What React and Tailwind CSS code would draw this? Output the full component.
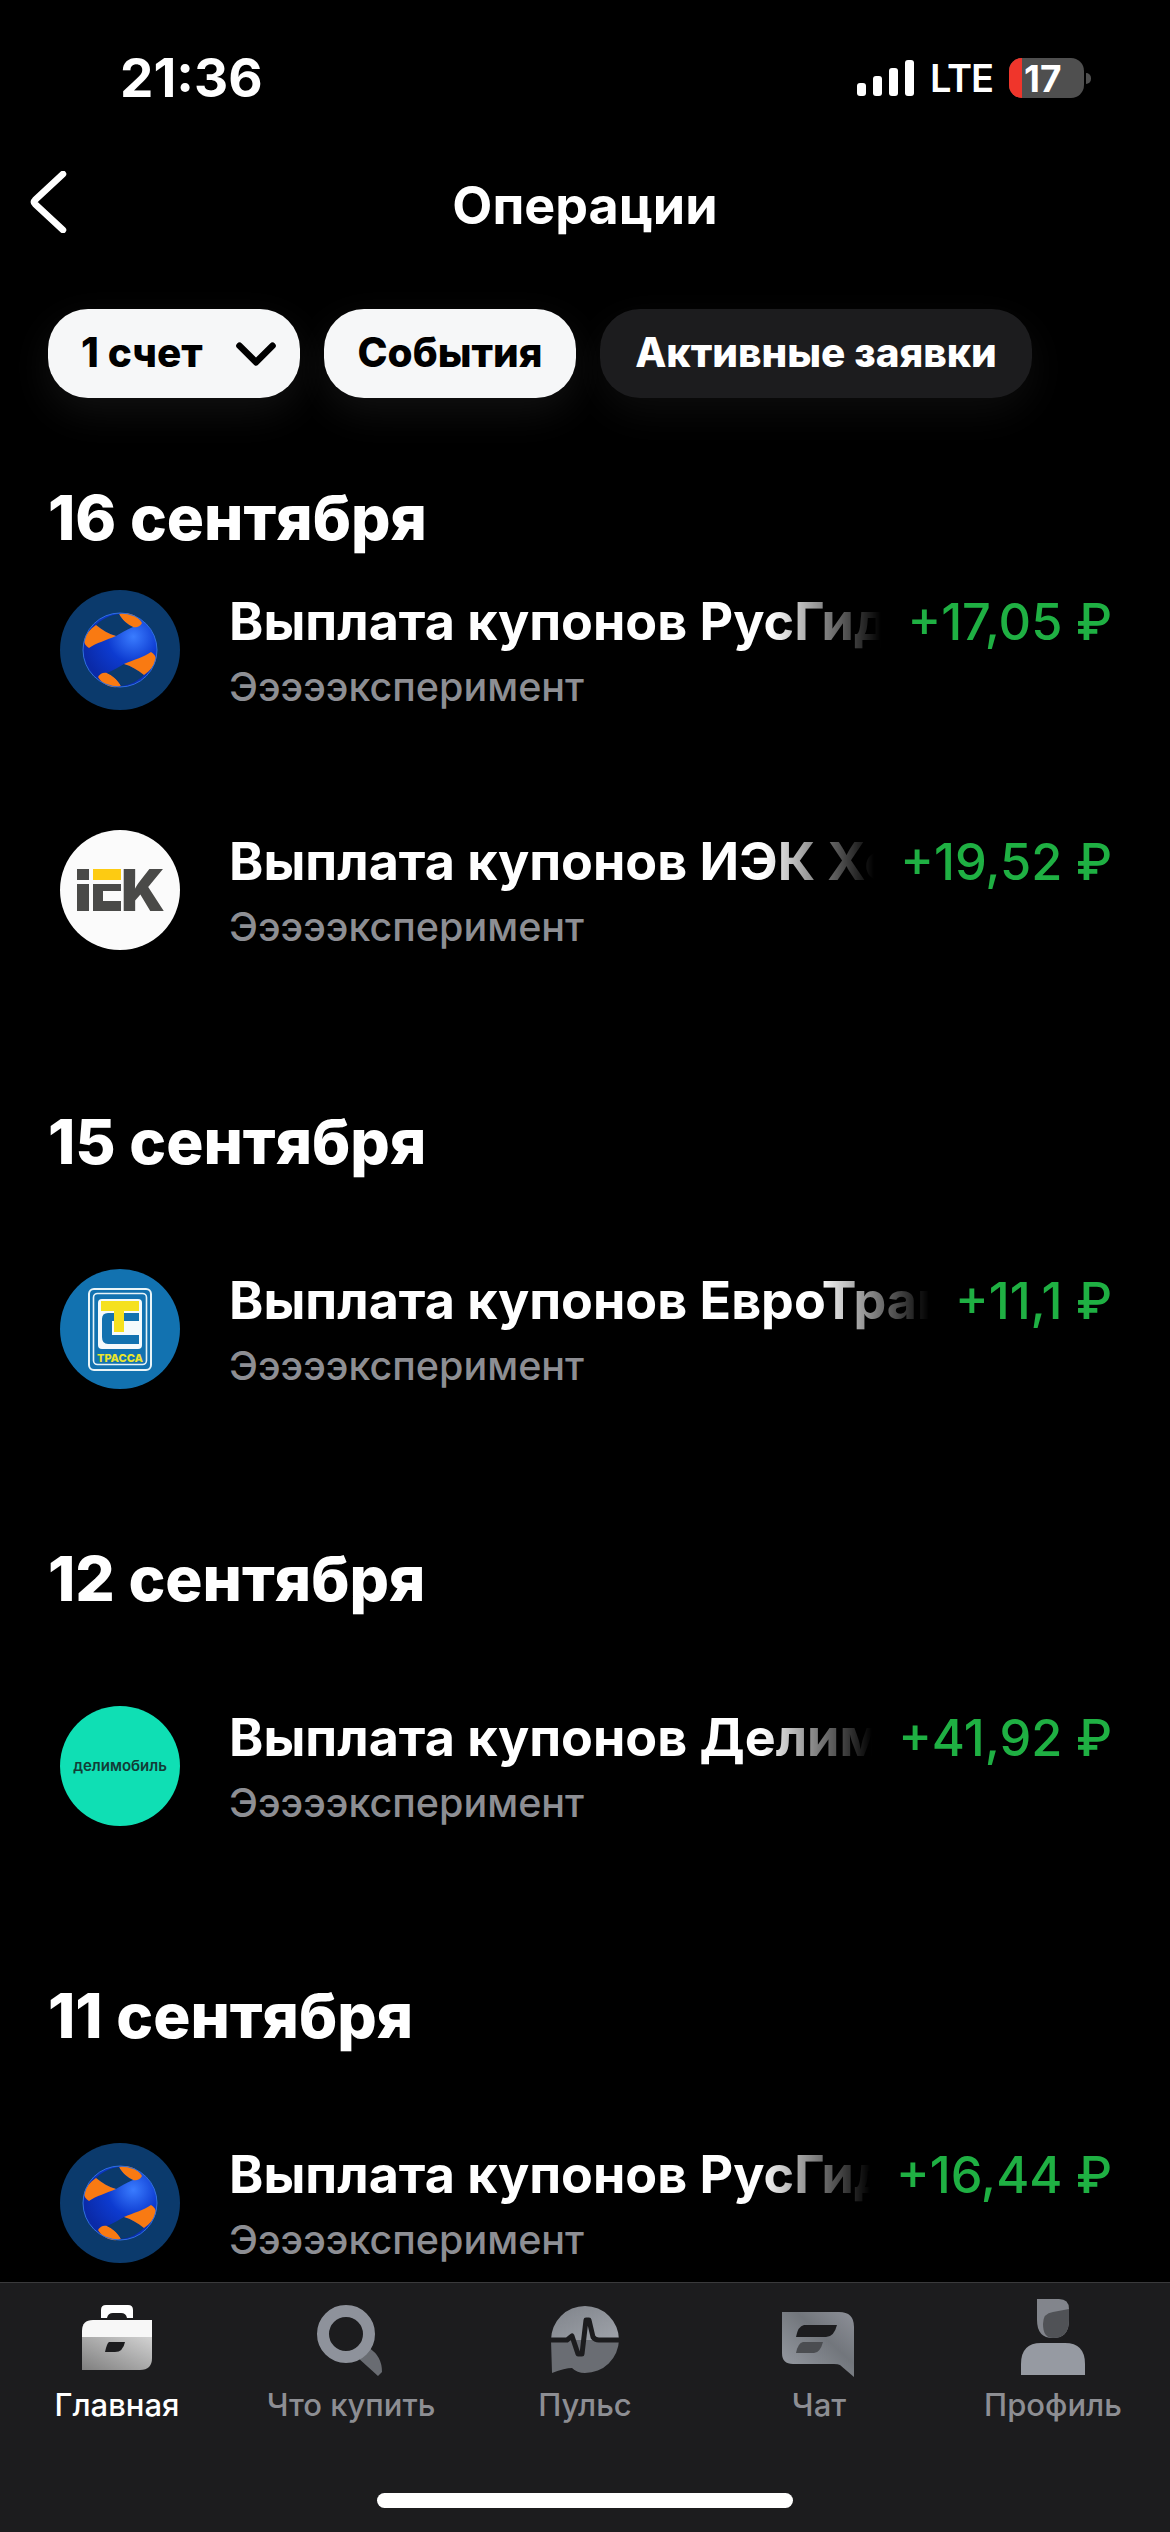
import React from "react";
import { ChevronDown } from "lucide-react";

const days = [
  {
    date: "16 сентября",
    first: true,
    rows: [
      { name: "Выплата купонов РусГидро", amount: "+17,05 ₽", logo: "hydro" },
      { name: "Выплата купонов ИЭК Холдинг", amount: "+19,52 ₽", logo: "iek" },
    ],
  },
  { date: "15 сентября", rows: [{ name: "Выплата купонов ЕвроТранс", amount: "+11,1 ₽", logo: "trassa" }] },
  { date: "12 сентября", rows: [{ name: "Выплата купонов Делимобиль", amount: "+41,92 ₽", logo: "deli" }] },
  { date: "11 сентября", rows: [{ name: "Выплата купонов РусГидро", amount: "+16,44 ₽", logo: "hydro" }] },
];

function HydroLogo() {
  const half = (
    <>
      <path d="M59 24C66 21 77 24 82 33C80 37 76 38 73 37C68 35 62 30 59 24Z" fill="#f97a12" />
      <path d="M36 35C42 29 50 25 59 24C62 30 68 35 73 37C66 40 61 43 56 46C49 44 42 40 36 35Z" fill="#0b3a6c" />
      <path d="M24 50C26 44 30 39 36 35C42 40 49 44 56 46C47 50 36 53 29 58C26 56 24 54 24 50Z" fill="#f97a12" />
    </>
  );
  return (
    <svg viewBox="0 0 120 120" className="h-[120px] w-[120px] shrink-0">
      <defs>
        <radialGradient id="sphere" cx="0.68" cy="0.32" r="0.7">
          <stop offset="0" stopColor="#3a7cff" />
          <stop offset="0.5" stopColor="#0d3bd0" />
          <stop offset="1" stopColor="#0a2aa8" />
        </radialGradient>
      </defs>
      <circle cx="60" cy="60" r="60" fill="#0b3a6c" />
      <circle cx="60" cy="60" r="37" fill="url(#sphere)" />
      {half}
      <g transform="rotate(180 60 60)">{half}</g>
      <circle cx="60" cy="60" r="37" fill="none" stroke="#2f6fe0" strokeWidth="1" />
    </svg>
  );
}

function IekLogo() {
  return (
    <svg viewBox="0 0 120 120" className="h-[120px] w-[120px] shrink-0">
      <circle cx="60" cy="60" r="60" fill="#fbfbfb" />
      <rect x="17" y="39" width="12" height="11" fill="#4a4a48" />
      <rect x="17" y="54" width="12" height="27" fill="#4a4a48" />
      <rect x="33" y="39" width="28" height="11" fill="#fdcb12" />
      <rect x="33" y="54" width="28" height="7" fill="#4a4a48" />
      <rect x="33" y="54" width="10" height="27" fill="#4a4a48" />
      <rect x="33" y="71" width="28" height="10" fill="#4a4a48" />
      <text x="61" y="81" fontFamily="Inter, sans-serif" fontWeight="900" fontSize="58" fill="#4a4a48">K</text>
    </svg>
  );
}

function TrassaLogo() {
  return (
    <svg viewBox="0 0 120 120" className="h-[120px] w-[120px] shrink-0">
      <circle cx="60" cy="60" r="60" fill="#1272b0" />
      <rect x="29" y="20" width="62" height="81" rx="5" fill="none" stroke="#e8f4f8" strokeWidth="2" />
      <rect x="33.5" y="24.5" width="53" height="71" rx="4" fill="none" stroke="#e8f4f8" strokeWidth="1.6" />
      <rect x="38" y="30" width="44" height="50" rx="4" fill="#f4fafc" />
      <path d="M79 44H48Q42 44 42 50V68Q42 75 48 75H79V66H52V52H79Z" fill="#1272b0" />
      <rect x="41" y="32" width="38" height="10" fill="#f5e11e" />
      <rect x="54" y="42" width="10" height="21" fill="#f5e11e" />
      <text x="60" y="93" textAnchor="middle" fontFamily="Inter, sans-serif" fontWeight="800" fontSize="11" fill="#ece42c">ТРАССА</text>
    </svg>
  );
}

function DeliLogo() {
  return (
    <div className="flex h-[120px] w-[120px] shrink-0 items-center justify-center rounded-full bg-[#0fdfb4] text-[15px] font-semibold text-[#123c36]">
      делимобиль
    </div>
  );
}

const logos = { hydro: HydroLogo, iek: IekLogo, trassa: TrassaLogo, deli: DeliLogo };

function Row({ name, amount, logo, tight }) {
  const Logo = logos[logo];
  return (
    <div className={`flex h-[240px] shrink-0 items-center gap-[49px] pl-[60px] pr-[58px] ${tight ? "-mt-[23px]" : "mt-[32px]"}`}>
      <Logo />
      <div className="min-w-0 flex-1 pt-[14px]">
        <div className="flex items-center gap-[26px] leading-[60px]">
          <div className="min-w-0 flex-1 overflow-hidden whitespace-nowrap text-[52px] font-bold text-white [mask-image:linear-gradient(to_right,#000_calc(100%-110px),transparent)]">
            {name}
          </div>
          <div className="shrink-0 text-[50.5px] font-medium text-[#1fb043]">{amount}</div>
        </div>
        <div className="text-[39.5px] font-medium leading-[70px] text-[#8d8e93]">Эээээксперимент</div>
      </div>
    </div>
  );
}

function HomeIcon() {
  return (
    <svg viewBox="0 0 80 80" className="h-[80px] w-[80px] overflow-visible">
      <defs>
        <linearGradient id="case" x1="0" y1="1" x2="1" y2="0">
          <stop offset="0" stopColor="#7f7f7f" />
          <stop offset="1" stopColor="#d2d2d2" />
        </linearGradient>
      </defs>
      <path d="M24 18V10Q24 5 29 5H51Q56 5 56 10V18H50Q49 13 44 13H36Q31 13 30 18Z" fill="#fff" />
      <path d="M5 37V31Q5 20 16 20H75V37Z" fill="#f7f7f7" />
      <path d="M5 37H75V58Q75 70 63 70H5Z" fill="url(#case)" />
      <path d="M32 42H48Q46 52 38 52H28Q30 43 32 42Z" fill="#1c1c1e" />
    </svg>
  );
}

function SearchIcon() {
  return (
    <svg viewBox="0 0 80 80" className="h-[80px] w-[80px] overflow-visible">
      <path d="M46 57Q54 55 58 48Q71 56 71 72L67 76Z" fill="#696c72" />
      <circle cx="35" cy="34" r="23" fill="none" stroke="#8e929b" strokeWidth="12" />
    </svg>
  );
}

function PulseIcon() {
  return (
    <svg viewBox="0 0 80 80" className="h-[80px] w-[80px] overflow-visible">
      <defs>
        <linearGradient id="pulseTop" x1="0" y1="0" x2="1" y2="1">
          <stop offset="0" stopColor="#7f838a" />
          <stop offset="1" stopColor="#9fa3aa" />
        </linearGradient>
      </defs>
      <path d="M6 40A34 34 0 0 1 74 40Z" fill="url(#pulseTop)" />
      <path d="M6 40H74A34 34 0 0 1 40 73Q32 73 27 68Q20 68 7 73Z" fill="#6a6d73" />
      <path d="M3 40H22L27 36L33 54H37L41 20H44L48 37Q50 40 54 40H77" fill="none" stroke="#1c1c1e" strokeWidth="5" strokeLinejoin="round" />
    </svg>
  );
}

function ChatIcon() {
  return (
    <svg viewBox="0 0 80 80" className="h-[80px] w-[80px] overflow-visible">
      <defs>
        <linearGradient id="chat" x1="0" y1="1" x2="1" y2="0">
          <stop offset="0" stopColor="#9a9ea6" />
          <stop offset="0.6" stopColor="#72767c" />
          <stop offset="1" stopColor="#8d9098" />
        </linearGradient>
      </defs>
      <path d="M3 12H60Q75 12 75 27V77L61 65Q59 64 55 64H14Q3 64 3 53Z" fill="url(#chat)" />
      <path d="M25 25H58Q55 37 47 37H17Q19 26 25 25Z" fill="#1c1c1e" />
      <path d="M24 42H44Q41 53 35 53H17Q19 43 24 42Z" fill="#4b4d51" />
    </svg>
  );
}

function ProfileIcon() {
  return (
    <svg viewBox="0 0 80 80" className="h-[80px] w-[80px] overflow-visible">
      <path d="M24 -1H46Q56 -1 56 9V20Q56 38 40 38Q24 38 24 20Z" fill="#82858c" />
      <path d="M30 24Q30 13 40 12L56 9V20Q56 38 40 38Q30 38 30 24Z" fill="#505256" />
      <path d="M8 75V64Q8 43 28 43H52Q72 43 72 64V75Z" fill="#969aa2" />
    </svg>
  );
}

const tabs = [
  { label: "Главная", Icon: HomeIcon, active: true },
  { label: "Что купить", Icon: SearchIcon },
  { label: "Пульс", Icon: PulseIcon },
  { label: "Чат", Icon: ChatIcon },
  { label: "Профиль", Icon: ProfileIcon },
];

export default function App() {
  return (
    <div className="flex h-[2532px] w-[1170px] flex-col overflow-hidden bg-black font-['Inter',sans-serif] text-white">
      {/* status bar */}
      <div className="flex h-[156px] shrink-0 items-center justify-between pl-[120px] pr-[79px]">
        <div className="text-[53px] font-bold leading-none">21:36</div>
        <div className="flex items-center">
          <div className="flex items-end gap-[7px]">
            <div className="h-[13px] w-[9px] rounded-[3px] bg-white" />
            <div className="h-[20px] w-[9px] rounded-[3px] bg-white" />
            <div className="h-[28px] w-[9px] rounded-[3px] bg-white" />
            <div className="h-[36px] w-[9px] rounded-[3px] bg-white" />
          </div>
          <div className="ml-[16px] text-[38px] font-semibold leading-none tracking-[-1px]">LTE</div>
          <div className="relative ml-[16px] flex h-[40px] w-[75px] items-center overflow-hidden rounded-[13px] bg-[#4f4f4f] pl-[15px] text-[37px] font-bold leading-none">
            <div className="absolute inset-y-0 left-0 w-[13px] bg-[#f0352b]" />
            <span className="relative">17</span>
          </div>
          <div className="ml-[2px] h-[11px] w-[5px] rounded-r-full bg-[#4f4f4f]" />
        </div>
      </div>

      {/* header */}
      <div className="grid h-[100px] shrink-0 grid-cols-[1fr_auto_1fr] items-center">
        <svg viewBox="0 0 40 62" className="-mt-[8px] ml-[28px] h-[62px] w-[40px]">
          <path d="M35 3L7 29Q5 31 7 33L35 59" fill="none" stroke="#fff" strokeWidth="6.5" strokeLinecap="round" strokeLinejoin="round" />
        </svg>
        <div className="text-[52px] font-bold leading-none">Операции</div>
      </div>

      {/* filters */}
      <div className="mt-[53px] flex h-[89px] shrink-0 gap-[24px] pl-[48px] text-[40.5px] font-extrabold">
        <div className="flex w-[252px] items-center justify-between rounded-[40px] bg-[#f6f7f8] pl-[33px] pr-[11px] text-black shadow-[0_14px_40px_rgba(255,255,255,0.07)]">
          1 счет
          <ChevronDown size={66} strokeWidth={2.4} />
        </div>
        <div className="flex w-[252px] items-center justify-center rounded-[40px] bg-[#f6f7f8] text-black shadow-[0_14px_40px_rgba(255,255,255,0.07)]">
          События
        </div>
        <div className="flex w-[432px] items-center justify-center rounded-[40px] bg-[#1c1c1e] text-white shadow-[0_14px_40px_rgba(255,255,255,0.05)]">
          Активные заявки
        </div>
      </div>

      {/* list */}
      <div className="min-h-0 flex-1 overflow-hidden pt-[85px]">
        {days.map((day, i) => (
          <div key={day.date} className={i > 0 ? "mt-[95px]" : "pb-[2px]"}>
            <div className="h-[70px] pl-[48px] text-[62px] font-extrabold leading-[70px]">{day.date}</div>
            {day.rows.map((row, j) => (
              <div key={j} className={j > 0 ? "-mt-[32px]" : ""}>
                <Row {...row} tight={day.first && j === 0} />
              </div>
            ))}
          </div>
        ))}
      </div>

      {/* tab bar */}
      <div className="h-[250px] shrink-0 border-t border-[#3a3a3c] bg-[#1c1c1e] pt-[17px]">
        <div className="grid grid-cols-5">
          {tabs.map(({ label, Icon, active }) => (
            <div key={label} className="flex flex-col items-center">
              <Icon />
              <div className={`text-[31px] font-medium leading-[50px] ${active ? "text-white" : "text-[#8d8e93]"}`}>{label}</div>
            </div>
          ))}
        </div>
        <div className="mx-auto mt-[63px] h-[15px] w-[416px] rounded-full bg-white" />
      </div>
    </div>
  );
}
